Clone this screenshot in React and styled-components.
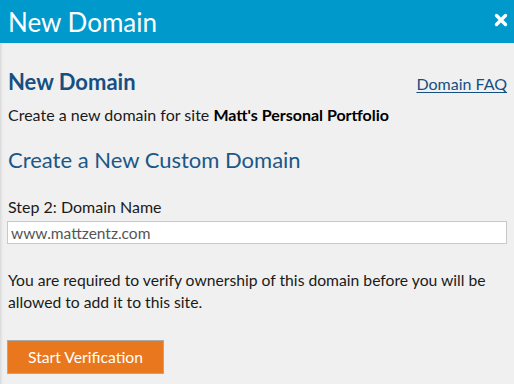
import React from "react";
import styled, { createGlobalStyle } from "styled-components";

const Global = createGlobalStyle`
  html, body { margin: 0; padding: 0; background: #f0f0f0; }
  body { font-family: Lato, "Liberation Sans", sans-serif; }
`;

const Dialog = styled.div`
  width: 514px;
  height: 384px;
  display: flex;
  flex-direction: column;
  background: #f0f0f0;
  overflow: hidden;
`;

const TitleBar = styled.div`
  height: 43px;
  flex: none;
  background: #0099cc;
  display: flex;
  align-items: center;
  justify-content: space-between;
  padding: 0 6px 0 8px;
  box-sizing: border-box;
`;

const TitleText = styled.div`
  color: #fff;
  font-size: 26px;
  font-weight: 400;
  line-height: 1;
  margin-top: 1px;
`;

const CloseButton = styled.button`
  border: 0;
  background: none;
  padding: 0;
  width: 14px;
  height: 14px;
  display: flex;
  margin-top: -4px;
  cursor: pointer;
`;

const Body = styled.div`
  flex: 1;
  padding: 0 7px 0 8px;
  box-shadow: inset 3px 0 3px -2px rgba(0, 0, 0, 0.12);
  display: flex;
  flex-direction: column;
`;

const HeadRow = styled.div`
  display: flex;
  justify-content: space-between;
  align-items: baseline;
  margin-top: 26px;
`;

const SectionTitle = styled.h2`
  margin: 0;
  font-size: 22px;
  font-weight: 700;
  color: #164f82;
  line-height: 26px;
`;

const FaqLink = styled.a`
  font-size: 16px;
  line-height: 20px;
  color: #164f82;
  text-decoration: underline;
  text-underline-offset: 2px;
`;

const Intro = styled.p`
  margin: 10px 0 0;
  font-size: 16px;
  color: #1a1a1a;
  line-height: 20px;
  b { font-weight: 700; color: #000; }
`;

const SubTitle = styled.h3`
  margin: 22px 0 0;
  font-size: 22px;
  font-weight: 400;
  color: #1b5788;
  line-height: 26px;
`;

const FieldLabel = styled.label`
  display: block;
  margin-top: 24px;
  font-size: 16px;
  color: #1a1a1a;
  line-height: 20px;
`;

const TextInput = styled.input`
  display: block;
  margin: 4px 0 0 -1px;
  width: 500px;
  height: 23px;
  box-sizing: border-box;
  border: 1px solid #c9c9c9;
  background: #fff;
  padding: 1px 3px 0;
  font-family: inherit;
  font-size: 15.5px;
  color: #555;
  outline: none;
`;

const Notice = styled.p`
  margin: 25px 0 0;
  font-size: 15.7px;
  color: #1a1a1a;
  line-height: 22px;
`;

const PrimaryButton = styled.button`
  margin: 27px 0 0 -1px;
  width: 157px;
  height: 34px;
  align-self: flex-start;
  background: #e8771e;
  border: 1px solid #a9a9a9;
  color: #fff;
  font-family: Lato, "Liberation Sans", sans-serif;
  font-size: 15.7px;
  padding: 0;
  cursor: pointer;
`;

export default function App() {
  return (
    <>
      <Global />
      <Dialog>
        <TitleBar>
          <TitleText>New Domain</TitleText>
          <CloseButton aria-label="Close">
            <svg width="14" height="14" viewBox="0 0 14 14">
              <path d="M2.5 2.5 L11.5 11.5 M11.5 2.5 L2.5 11.5" stroke="#fff" strokeWidth="3.4" strokeLinecap="round" />
            </svg>
          </CloseButton>
        </TitleBar>
        <Body>
          <HeadRow>
            <SectionTitle>New Domain</SectionTitle>
            <FaqLink href="#">Domain FAQ</FaqLink>
          </HeadRow>
          <Intro>
            Create a new domain for site <b>Matt's Personal Portfolio</b>
          </Intro>
          <SubTitle>Create a New Custom Domain</SubTitle>
          <FieldLabel>Step 2: Domain Name</FieldLabel>
          <TextInput defaultValue="www.mattzentz.com" />
          <Notice>
            You are required to verify ownership of this domain before you will be allowed to add it to this site.
          </Notice>
          <PrimaryButton>Start Verification</PrimaryButton>
        </Body>
      </Dialog>
    </>
  );
}
